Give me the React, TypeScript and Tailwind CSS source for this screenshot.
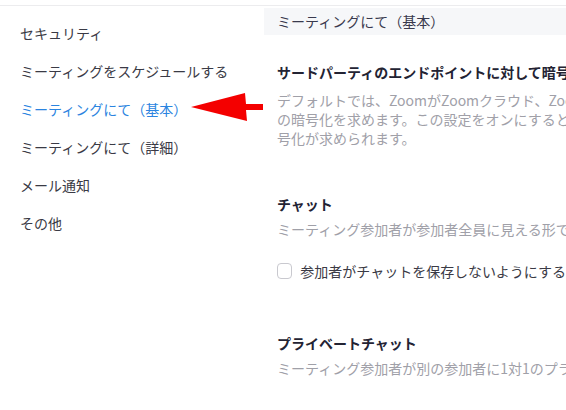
const NAV = [
  'セキュリティ',
  'ミーティングをスケジュールする',
  'ミーティングにて（基本）',
  'ミーティングにて（詳細）',
  'メール通知',
  'その他',
]

export default function App() {
  return (
    <div className="relative w-[566px] h-[410px] overflow-hidden bg-white font-['Noto_Sans_CJK_JP',sans-serif] text-[14px]">
      <div className="h-[6px] border-b border-[#ececee]" />

      <div className="flex">
        {/* sidebar */}
        <nav className="w-[264px] shrink-0 pt-[8px] pl-[20px]">
          {NAV.map((label, i) => (
            <div key={label}
              className={`h-[38px] flex items-center whitespace-nowrap ${i === 2 ? 'text-[#2b84e0]' : 'text-[#3a3a45]'}`}>
              {label}
            </div>
          ))}
        </nav>

        {/* settings */}
        <main className="flex-1 min-w-0 overflow-hidden whitespace-nowrap">
          <div className="mt-[2px] h-[27px] bg-[#f6f7f9] pl-[13px] flex items-center text-[#39394d]">
            ミーティングにて（基本）
          </div>

          <section className="pl-[13px]">
            <h3 className="mt-[27px] leading-[20px] font-bold text-[#232333]">
              サードパーティのエンドポイントに対して暗号化を求める
            </h3>
            <p className="mt-[9px] leading-[19px] text-[#a0a0a8]">
              デフォルトでは、ZoomがZoomクラウド、Zoomクラウド間のデータ<br />
              の暗号化を求めます。この設定をオンにすると、サードパーティの<br />
              号化が求められます。
            </p>

            <h3 className="mt-[46px] leading-[20px] font-bold text-[#232333]">チャット</h3>
            <p className="mt-[6px] leading-[19px] text-[#a0a0a8]">
              ミーティング参加者が参加者全員に見える形でメッセージを送信できます
            </p>
            <label className="mt-[22px] h-[20px] flex items-center gap-[8px] text-[#3a3a45]">
              <span className="w-[16px] h-[16px] rounded-[4px] border border-[#c9c9cf] bg-white" />
              参加者がチャットを保存しないようにする
            </label>

            <h3 className="mt-[52px] leading-[20px] font-bold text-[#232333]">プライベートチャット</h3>
            <p className="mt-[6px] leading-[19px] text-[#a0a0a8]">
              ミーティング参加者が別の参加者に1対1のプライベートメッセージを送信できます
            </p>
          </section>
        </main>
      </div>

      {/* annotation arrow */}
      <svg className="absolute left-[190px] top-[92px]" width="75" height="31" viewBox="0 0 75 31">
        <polygon points="1,15 55,1 56,12 73,12 73,18 56,18 57,29" fill="#f40000" />
      </svg>
    </div>
  )
}
